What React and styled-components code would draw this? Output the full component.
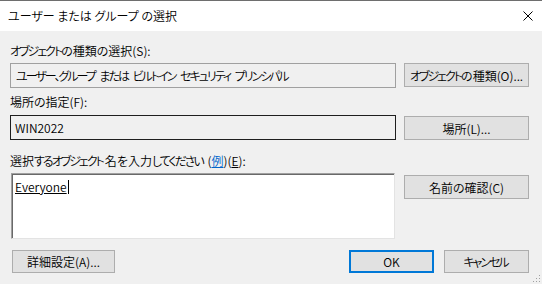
import React from "react";
import styled, { createGlobalStyle } from "styled-components";

const Global = createGlobalStyle`
  html, body { margin: 0; padding: 0; background: #f0f0f0; }
  body {
    font-family: "Noto Sans CJK JP", "Noto Sans", sans-serif;
    font-size: 12px;
    font-weight: 350;
    color: #000;
    font-feature-settings: "palt";
  }
`;

const Window = styled.div`
  position: relative;
  width: 542px;
  height: 284px;
  box-sizing: border-box;
  border-top: 1px solid #6e6e6e;
  background: #f0f0f0;
  display: flex;
  flex-direction: column;
  overflow: hidden;
`;

const TitleBar = styled.div`
  height: 30px;
  background: #fff;
  display: flex;
  align-items: center;
  justify-content: space-between;
  padding: 0 9px 0 8px;
`;

const Title = styled.span`
  font-size: 12px;
  line-height: 16px;
`;

const Close = styled.svg`
  width: 10px;
  height: 10px;
  display: block;
`;

const Content = styled.div`
  display: flex;
  flex-direction: column;
  padding: 0 13px 0 10px;
`;

const Section = styled.div`
  display: grid;
  grid-template-columns: 386px 125px;
  column-gap: 8px;
  row-gap: ${(p) => p.$gap || 4}px;
  margin-top: ${(p) => p.$top}px;
  align-items: start;
`;

const Label = styled.div`
  grid-column: 1 / 3;
  line-height: 16px;
  white-space: pre;
`;

const Field = styled.div`
  box-sizing: border-box;
  height: 25px;
  border: 1px solid ${(p) => p.$border};
  background: #f0f0f0;
  display: flex;
  align-items: center;
  padding-left: ${(p) => p.$pad || 4}px;
  overflow: hidden;
`;

const FieldText = styled.span`
  white-space: pre;
`;

const TextArea = styled.div`
  box-sizing: border-box;
  height: 66px;
  margin: 0 1px;
  background: #fff;
  border: 1px solid;
  border-color: #a0a0a0 #e3e3e3 #e3e3e3 #a0a0a0;
  box-shadow: inset 1px 1px 0 #696969;
  padding: 3px 0 0 3px;
  line-height: 20px;
  display: flex;
  align-items: flex-start;
`;

const Typed = styled.span`
  text-decoration: underline;
  text-underline-offset: 1px;
`;

const Caret = styled.span`
  display: inline-block;
  width: 1px;
  height: 14px;
  background: #000;
  margin: 3px 0 0 1px;
`;

const Button = styled.button`
  box-sizing: border-box;
  width: ${(p) => p.$w || 125}px;
  height: ${(p) => p.$h || 24}px;
  margin-top: ${(p) => p.$mt || 0}px;
  background: #e1e1e1;
  border: ${(p) => (p.$default ? "2px solid #0078d7" : "1px solid #adadad")};
  font-family: inherit;
  font-size: 12px;
  font-weight: inherit;
  font-feature-settings: "palt";
  color: #000;
  padding: 0;
  display: flex;
  align-items: center;
  justify-content: center;
  white-space: pre;
`;

const Link = styled.span`
  color: #0066cc;
  text-decoration: underline;
`;

const U = styled.span`
  text-decoration: underline;
`;

const Kana = styled.span`
  letter-spacing: -2px;
  margin-right: 2px;
`;

const Footer = styled.div`
  display: flex;
  align-items: center;
  margin-top: 11px;
  padding-left: 2px;
`;

const Spacer = styled.div`
  flex: 1;
`;

const FooterRight = styled.div`
  display: flex;
  gap: 10px;
`;

const Grip = styled.svg`
  position: absolute;
  right: 1px;
  bottom: 1px;
  width: 8px;
  height: 8px;
`;

/* Tightens runs of kana so they match the narrow proportional kana of the UI font */
function JP({ children }) {
  const parts = String(children).split(/([\u3001\u3040-\u30ff]+)/);
  return (
    <span>
      {parts.map((p, i) =>
        /^[\u3001\u3040-\u30ff]+$/.test(p) ? <Kana key={i}>{p}</Kana> : <React.Fragment key={i}>{p}</React.Fragment>
      )}
    </span>
  );
}

export default function App() {
  return (
    <>
      <Global />
      <Window>
        <TitleBar>
          <Title>ユーザー または グループ の選択</Title>
          <Close viewBox="0 0 10 10">
            <path d="M0.5 0.5 L9.5 9.5 M9.5 0.5 L0.5 9.5" stroke="#000" strokeWidth="1" fill="none" />
          </Close>
        </TitleBar>
        <Content>
          <Section $top={12}>
            <Label><JP>オブジェクトの種類の選択(S):</JP></Label>
            <Field $border="#a0a0a0" $pad={5}>
              <FieldText>
                <JP>ユーザー、グループ または ビルトイン セキュリティ プリンシパル</JP>
              </FieldText>
            </Field>
            <Button><JP>オブジェクトの種類(O)...</JP></Button>
          </Section>
          <Section $top={6} $gap={5}>
            <Label><JP>場所の指定(F):</JP></Label>
            <Field $border="#1e1e1e"><FieldText>WIN2022</FieldText></Field>
            <Button $mt={1}>場所(L)...</Button>
          </Section>
          <Section $top={13}>
            <Label>
              <JP>選択するオブジェクト名を入力してください (</JP>
              <Link>例</Link>)(<U>E</U>):
            </Label>
            <TextArea>
              <Typed>Everyone</Typed>
              <Caret />
            </TextArea>
            <Button $mt={2}><JP>名前の確認(C)</JP></Button>
          </Section>
          <Footer>
            <Button $w={103} $h={23}>詳細設定(A)...</Button>
            <Spacer />
            <FooterRight>
              <Button $w={85} $h={23} $default>OK</Button>
              <Button $w={85} $h={23}><JP>キャンセル</JP></Button>
            </FooterRight>
          </Footer>
        </Content>
        <Grip viewBox="0 0 8 8">
          <rect x="6" y="0" width="1" height="1" fill="#a0a0a0" />
          <rect x="3" y="3" width="1" height="1" fill="#a0a0a0" />
          <rect x="6" y="3" width="1" height="1" fill="#a0a0a0" />
          <rect x="0" y="6" width="1" height="1" fill="#a0a0a0" />
          <rect x="3" y="6" width="1" height="1" fill="#a0a0a0" />
          <rect x="6" y="6" width="1" height="1" fill="#a0a0a0" />
        </Grip>
      </Window>
    </>
  );
}
